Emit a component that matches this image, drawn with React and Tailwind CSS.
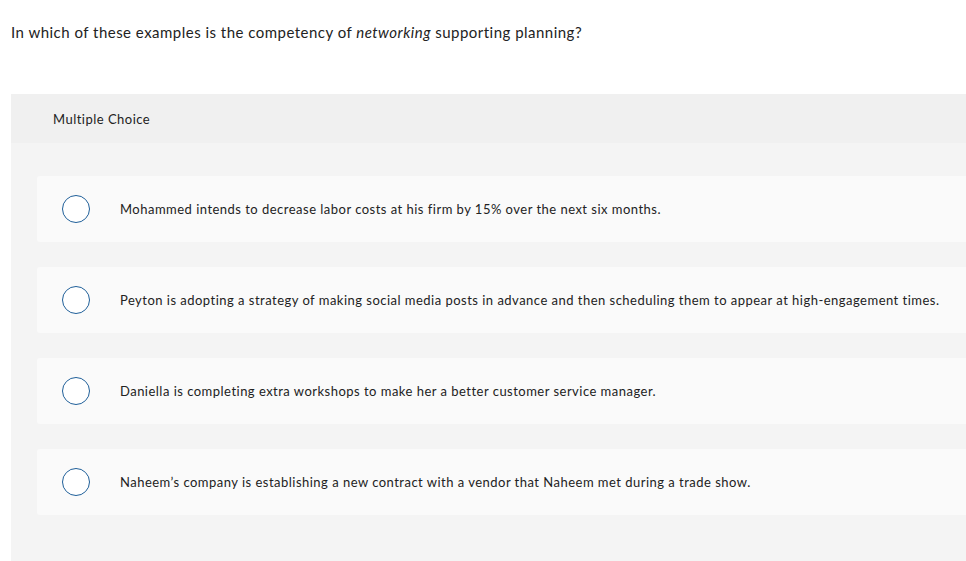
import React from "react";

const options = [
  "Mohammed intends to decrease labor costs at his firm by 15% over the next six months.",
  "Peyton is adopting a strategy of making social media posts in advance and then scheduling them to appear at high-engagement times.",
  "Daniella is completing extra workshops to make her a better customer service manager.",
  "Naheem’s company is establishing a new contract with a vendor that Naheem met during a trade show.",
];

export default function App() {
  return (
    <div
      className="w-[966px] h-[561px] overflow-hidden bg-white text-[#222] tracking-[0.48px]"
      style={{ fontFamily: "Lato, 'Open Sans', sans-serif" }}
    >
      <p className="pl-[11px] pt-[21px] text-[15px] leading-[22px]">
        In which of these examples is the competency of <em>networking</em> supporting planning?
      </p>
      <div className="ml-[11px] mt-[51px] w-[980px]">
        <div className="h-[49px] bg-[#f0f0f0] pl-[42px] pt-[2px] flex items-center text-[13px]">
          Multiple Choice
        </div>
        <div className="bg-[#f4f4f4] pt-[33px] pl-[26px] pb-[60px] flex flex-col gap-[25px]">
          {options.map((o, i) => (
            <div
              key={i}
              className="h-[66px] bg-[#fafafa] rounded-[3px] flex items-center"
            >
              <div className="ml-[25px] w-[28px] h-[28px] rounded-full border-[1.5px] border-[#1f5f99] bg-white shrink-0" />
              <span className="ml-[30px] pt-[2px] text-[13px] whitespace-nowrap">{o}</span>
            </div>
          ))}
        </div>
      </div>
    </div>
  );
}
